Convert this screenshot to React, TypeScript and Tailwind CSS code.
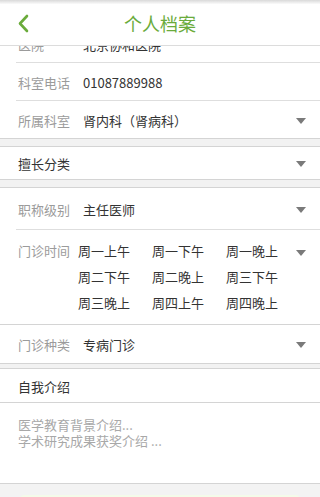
const font = { fontFamily: '"Noto Sans CJK SC", "Noto Sans", sans-serif' };

const Arrow = ({ top = false }: { top?: boolean }) => (
  <div className={`ml-auto mr-[14px] ${top ? "self-start mt-[12px]" : ""}`}>
    <div className="w-0 h-0 border-l-[5px] border-r-[5px] border-t-[6px] border-l-transparent border-r-transparent border-t-[#7a7a7a]" />
  </div>
);

const Row = ({ label, value, arrow, h = "h-[38px]" }: { label: string; value: string; arrow?: boolean; h?: string }) => (
  <div className="pl-4">
    <div className={`flex items-center pt-[2px] ${h} border-b border-[#dedede]`}>
      <span className="w-[67px] pl-[2px] text-[13px] text-[#9b9b9b]">{label}</span>
      <span className="text-[13px] text-[#333]">{value}</span>
      {arrow && <Arrow />}
    </div>
  </div>
);

const Gap = ({ h = "h-[8px]" }: { h?: string }) => <div className={`${h} bg-[#f2f2f2] border-b border-[#d4d4d4]`} />;

const slots = ["周一上午", "周一下午", "周一晚上", "周二下午", "周二晚上", "周三下午", "周三晚上", "周四上午", "周四晚上"];

export default function App() {
  return (
    <div className="w-[320px] h-[497px] overflow-hidden bg-[#f3f3f3]" style={font}>
      {/* 标题栏 */}
      <div className="relative z-10 h-[46px] bg-white border-b border-[#dcdcdc] bg-gradient-to-b from-[#d9d9d9] via-white via-[10%] to-white">
        <svg className="absolute left-[17px] top-[14px]" width="12" height="19" viewBox="0 0 12 19">
          <path d="M10 2 L3 9.5 L10 17" fill="none" stroke="#6aab3b" strokeWidth="2.6" strokeLinecap="round" strokeLinejoin="round" />
        </svg>
        <h1 className="pt-[9px] text-center text-[18px] leading-[28px] text-[#6aab3b] font-normal">个人档案</h1>
      </div>

      <div className="h-[451px] overflow-hidden">
        <div className="bg-white -mt-[21px] border-b border-[#d4d4d4]">
          <Row label="医院" value="北京协和医院" />
          <Row label="科室电话" value="01087889988" />
          <div className="flex items-center pt-[2px] h-[37px] pl-4">
            <span className="w-[67px] pl-[2px] text-[13px] text-[#9b9b9b]">所属科室</span>
            <span className="text-[13px] text-[#333]">肾内科（肾病科）</span>
            <Arrow />
          </div>
        </div>
        <Gap />

        <div className="bg-white border-b border-[#d4d4d4] h-[33px] pt-[2px] flex items-center pl-[18px]">
          <span className="text-[13px] text-[#333]">擅长分类</span>
          <Arrow />
        </div>
        <Gap />

        <div className="bg-white border-b border-[#d4d4d4]">
          <Row label="职称级别" value="主任医师" arrow h="h-[42px]" />
          <div className="flex pl-4 pt-[8px] pb-[8px]">
            <span className="w-[67px] pl-[2px] text-[13px] leading-[26px] text-[#9b9b9b]">门诊时间</span>
            <div className="grid grid-cols-[74px_74px_70px] text-[13px] leading-[26px] text-[#333]">
              {slots.map((s) => (
                <span key={s}>{s}</span>
              ))}
            </div>
            <Arrow top />
          </div>
        </div>

        <div className="bg-white border-b border-[#d4d4d4] h-[39px] pt-[2px] flex items-center pl-4">
          <span className="w-[67px] pl-[2px] text-[13px] text-[#9b9b9b]">门诊种类</span>
          <span className="text-[13px] text-[#333]">专病门诊</span>
          <Arrow />
        </div>
        <Gap h="h-[5px]" />

        <div className="bg-white border-b border-[#d4d4d4]">
          <div className="h-[34px] pt-[2px] flex items-center pl-[18px] border-b border-[#d4d4d4]">
            <span className="text-[13px] text-[#333]">自我介绍</span>
          </div>
          <div className="h-[80px] pl-[18px] pt-[14px] text-[13px] leading-[16px] text-[#a8a8a8]">
            <p>医学教育背景介绍...</p>
            <p>学术研究成果获奖介绍 ...</p>
          </div>
        </div>

        <div className="pt-[11px] px-[20px]">
          <div className="h-[20px] bg-[#f4fbe9] rounded" />
        </div>
      </div>
    </div>
  );
}
